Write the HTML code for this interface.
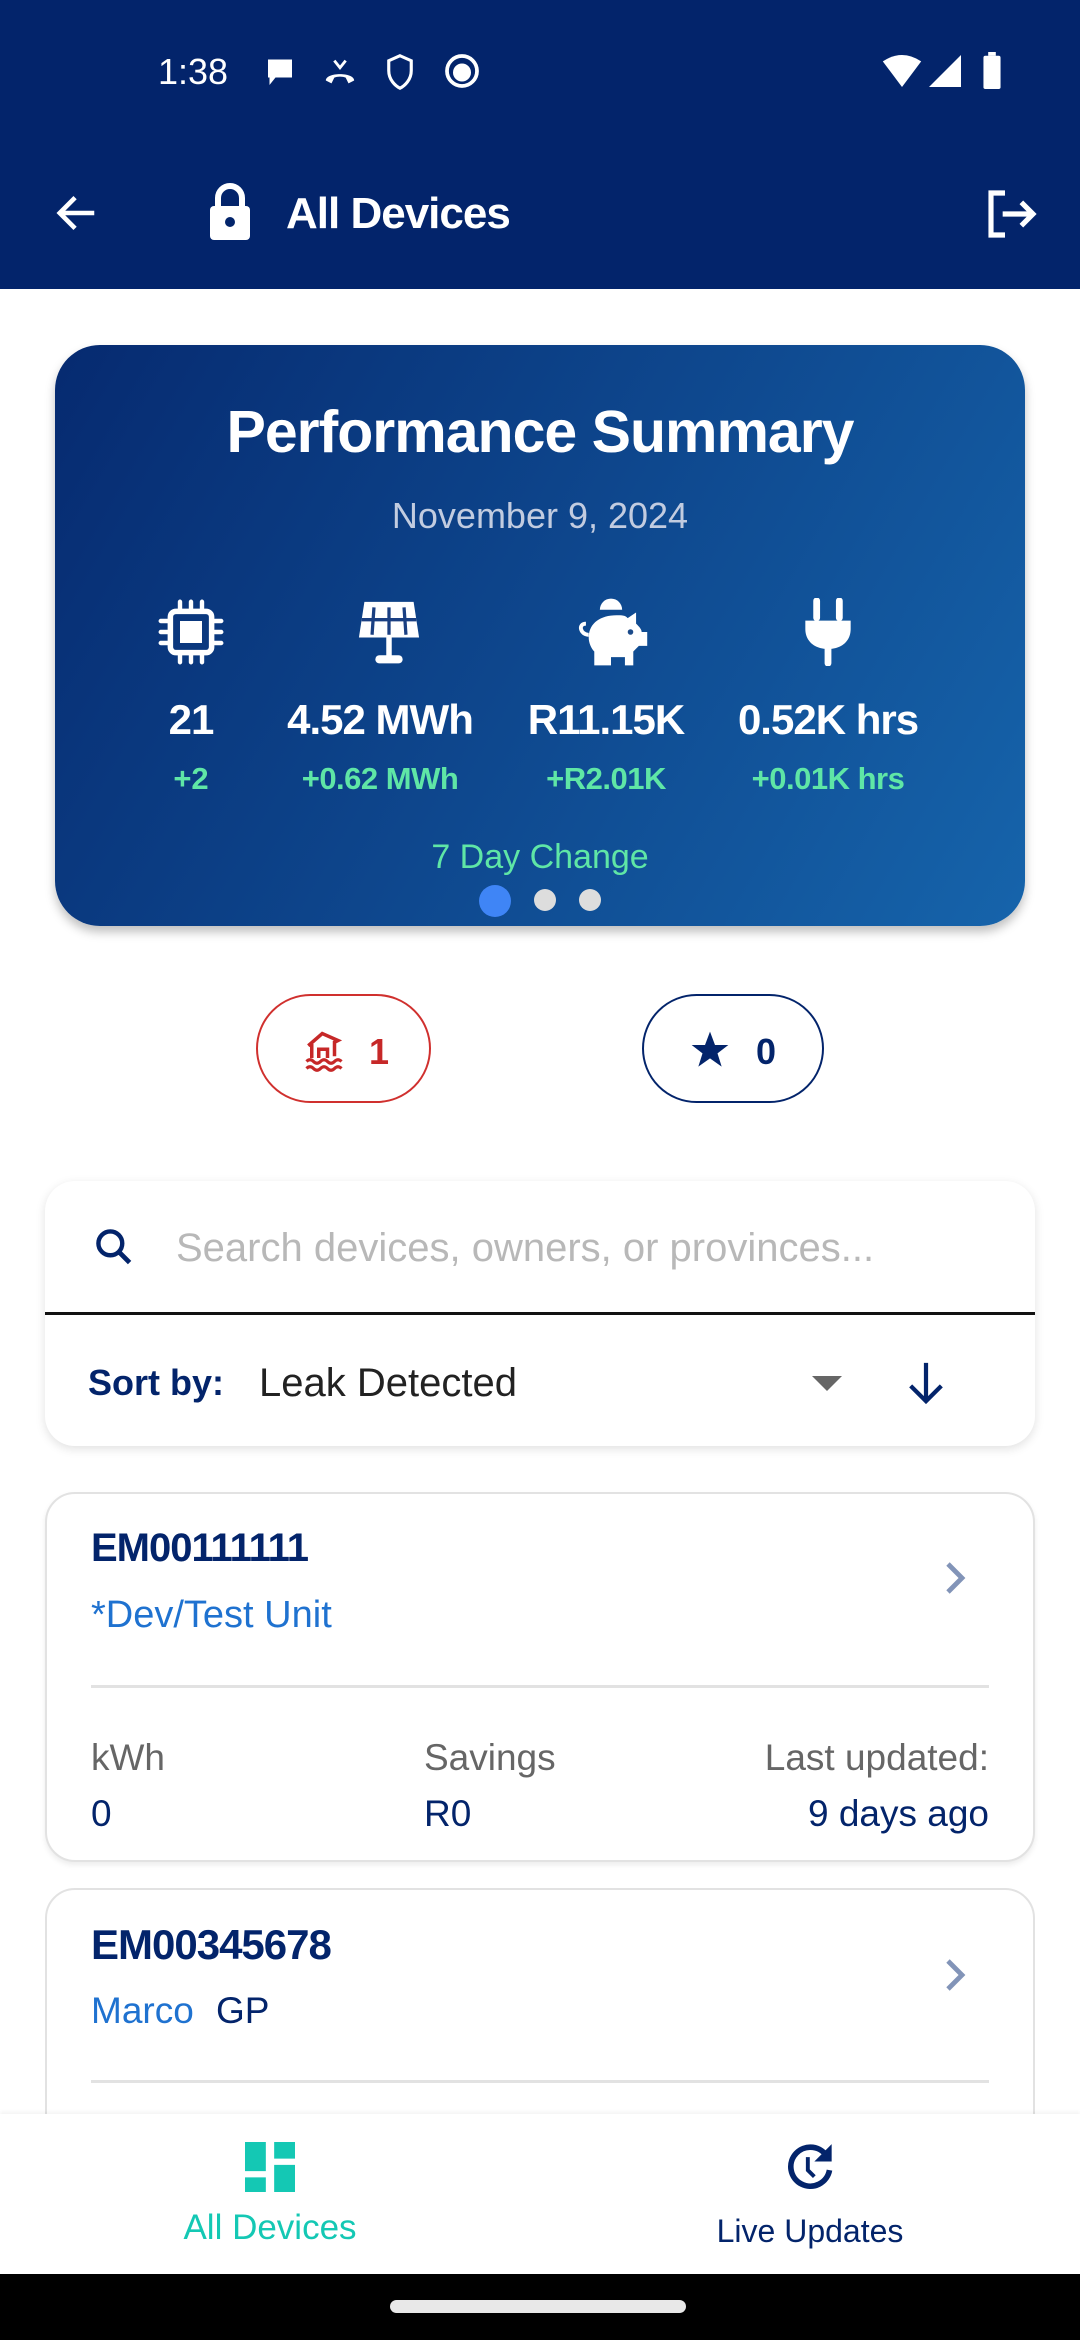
<!DOCTYPE html>
<html><head><meta charset="utf-8"><style>
*{margin:0;padding:0;box-sizing:border-box}
body{width:1080px;height:2340px;position:relative;overflow:hidden;background:#fff;font-family:"Liberation Sans",sans-serif}
.abs{position:absolute}
.t{position:absolute;white-space:nowrap}
.c{transform:translateX(-50%)}
</style></head><body>
<div class="abs" style="left:0;top:0;width:1080px;height:289px;background:#03246b"></div>
<div class="t" style="left:158px;top:51px;font-size:36px;color:#fff">1:38</div>
<svg class="abs" style="left:262px;top:55px" width="36" height="36" viewBox="0 0 24 24"><path d="M4 3h16v12H9l-4 5V15H4z" fill="#fff"/></svg>
<svg class="abs" style="left:320px;top:55px" width="40" height="34" viewBox="0 0 24 24"><path d="M2 18c0-6 20-6 20 0l-4 2-2-4c-2-1-6-1-8 0l-2 4z" fill="#fff"/><path d="M8 4l4 5 4-5" stroke="#fff" stroke-width="2" fill="none"/></svg>
<svg class="abs" style="left:385px;top:53px" width="30" height="38" viewBox="0 0 24 30"><path d="M12 2l9 4v8c0 7-5 12-9 14-4-2-9-7-9-14V6z" stroke="#fff" stroke-width="2.5" fill="none"/></svg>
<svg class="abs" style="left:444px;top:53px" width="36" height="36" viewBox="0 0 24 24"><circle cx="12" cy="12" r="10" fill="none" stroke="#fff" stroke-width="2.5"/><circle cx="12" cy="13" r="6" fill="#fff"/></svg>
<svg class="abs" style="left:882px;top:55px" width="40" height="32" viewBox="0 0 24 20"><path d="M0 4Q12-4 24 4L12 20z" fill="#fff"/></svg>
<svg class="abs" style="left:928px;top:55px" width="34" height="32" viewBox="0 0 24 24"><path d="M24 0V24H0z" fill="#fff"/></svg>
<svg class="abs" style="left:982px;top:52px" width="20" height="38" viewBox="0 0 10 20"><rect x="3" y="0" width="4" height="2" fill="#fff"/><rect x="0.5" y="2" width="9" height="17.5" rx="1" fill="#fff"/></svg>
<svg class="abs" style="left:52px;top:190px" width="50" height="46" viewBox="0 0 24 24"><path d="M21 12H4M11 4l-8 8 8 8" stroke="#fff" stroke-width="2.4" fill="none"/></svg>
<svg class="abs" style="left:206px;top:182px" width="48" height="60" viewBox="0 0 24 30"><path d="M6 13V8a6 6 0 0112 0v5" stroke="#fff" stroke-width="3" fill="none"/><rect x="2" y="12" width="20" height="17" rx="2" fill="#fff"/><circle cx="12" cy="20" r="2.5" fill="#03246b"/></svg>
<div class="t" style="left:286px;top:189px;font-size:44px;font-weight:bold;color:#fff;letter-spacing:-1px">All Devices</div>
<svg class="abs" style="left:984px;top:186px" width="56" height="56" viewBox="0 0 24 24"><path d="M9 3H3v18h6" stroke="#fff" stroke-width="2.2" fill="none"/><path d="M8 12h13M16 7l5 5-5 5" stroke="#fff" stroke-width="2.2" fill="none"/></svg>

<div class="abs" style="left:55px;top:345px;width:970px;height:581px;border-radius:45px;background:linear-gradient(120deg,#062a70,#1664ab);box-shadow:0 6px 10px rgba(0,0,0,0.25)"></div>
<div class="t c" style="left:540px;top:398px;font-size:59px;font-weight:bold;color:#fff;letter-spacing:-1px">Performance Summary</div>
<div class="t c" style="left:540px;top:495px;font-size:36px;color:#c2cce0">November 9, 2024</div>
<svg class="abs" style="left:158px;top:598px" width="66" height="68" viewBox="0 0 24 24"><rect x="4.5" y="4.5" width="15" height="15" rx="2" stroke="#fff" stroke-width="2" fill="none"/><rect x="8" y="8" width="8" height="8" fill="#fff"/><path d="M8 1v3M12 1v3M16 1v3M8 20v3M12 20v3M16 20v3M1 8h3M1 12h3M1 16h3M20 8h3M20 12h3M20 16h3" stroke="#fff" stroke-width="1.6" stroke-linecap="round"/></svg>
<svg class="abs" style="left:348px;top:598px" width="82" height="68" viewBox="0 0 30 24"><path d="M6 1h18l2 13H4z" fill="#fff"/><path d="M9.5 3l-.7 10M15 3v10M20.5 3l.7 10M5 7.5h20" stroke="#1a3f82" stroke-width="1.2"/><rect x="14" y="14" width="2" height="7" fill="#fff"/><rect x="10" y="20.5" width="10" height="3" rx="1.5" fill="#fff"/></svg>
<svg class="abs" style="left:572px;top:598px" width="78" height="68" viewBox="0 0 28 24"><path d="M10 4a4 4 0 018 0z" fill="#fff"/><path d="M6 14c0-5 4-8 10-8 2 0 3 0 4 1l3-2v4c1 1 2 2 2 3h2v5h-3l-2 2v5h-3v-3h-5v3H8v-5c-1-1-2-3-2-5z" fill="#fff"/><path d="M6 13c-3 0-4-4-1-4" stroke="#fff" stroke-width="1.4" fill="none"/><circle cx="21" cy="12" r="1" fill="#1a4a8a"/></svg>
<svg class="abs" style="left:799px;top:598px" width="58" height="68" viewBox="0 0 20 24"><path d="M6 1v6M14 1v6" stroke="#fff" stroke-width="2.4" stroke-linecap="round"/><path d="M2 8h16v3c0 4-3 7-8 7s-8-3-8-7z" fill="#fff"/><path d="M10 17v6" stroke="#fff" stroke-width="2.4" stroke-linecap="round"/></svg>
<div class="t c" style="left:191px;top:696px;font-size:42px;font-weight:bold;color:#fff;letter-spacing:-1px">21</div>
<div class="t c" style="left:380px;top:696px;font-size:42px;font-weight:bold;color:#fff;letter-spacing:-1px">4.52 MWh</div>
<div class="t c" style="left:606px;top:696px;font-size:42px;font-weight:bold;color:#fff;letter-spacing:-1px">R11.15K</div>
<div class="t c" style="left:828px;top:696px;font-size:42px;font-weight:bold;color:#fff;letter-spacing:-1px">0.52K hrs</div>
<div class="t c" style="left:191px;top:761px;font-size:31px;font-weight:bold;color:#5fe6a6">+2</div>
<div class="t c" style="left:380px;top:761px;font-size:31px;font-weight:bold;color:#5fe6a6;letter-spacing:-.5px">+0.62 MWh</div>
<div class="t c" style="left:606px;top:761px;font-size:31px;font-weight:bold;color:#5fe6a6;letter-spacing:-.5px">+R2.01K</div>
<div class="t c" style="left:828px;top:761px;font-size:31px;font-weight:bold;color:#5fe6a6;letter-spacing:-.5px">+0.01K hrs</div>
<div class="t c" style="left:540px;top:838px;font-size:34px;color:#5fe6a6">7 Day Change</div>
<div class="abs" style="left:479px;top:885px;width:32px;height:32px;border-radius:50%;background:#3f85f6"></div>
<div class="abs" style="left:534px;top:889px;width:22px;height:22px;border-radius:50%;background:#ddd"></div>
<div class="abs" style="left:579px;top:889px;width:22px;height:22px;border-radius:50%;background:#ddd"></div>

<div class="abs" style="left:256px;top:994px;width:175px;height:109px;border:2.5px solid #d0302e;border-radius:55px"></div>
<svg class="abs" style="left:302px;top:1030px" width="44" height="42" viewBox="0 0 24 24"><path d="M3 9l8-7 9 4-2 1v8M5 8v8M9 16v-5h5v5" stroke="#c62828" stroke-width="2" fill="none"/><path d="M2 18q2-2 4 0t4 0 4 0 4 0 4 0M2 22q2-2 4 0t4 0 4 0 4 0 4 0" stroke="#c62828" stroke-width="1.8" fill="none"/></svg>
<div class="t" style="left:369px;top:1031px;font-size:36px;font-weight:bold;color:#c62828">1</div>
<div class="abs" style="left:642px;top:994px;width:182px;height:109px;border:2.5px solid #03246b;border-radius:55px"></div>
<svg class="abs" style="left:690px;top:1030px" width="40" height="40" viewBox="0 0 24 24"><path d="M12 1l3 8h8l-6.5 5 2.5 8L12 17l-7 5 2.5-8L1 9h8z" fill="#03246b"/></svg>
<div class="t" style="left:756px;top:1031px;font-size:36px;font-weight:bold;color:#03246b">0</div>

<div class="abs" style="left:45px;top:1181px;width:990px;height:265px;border-radius:30px;background:#fff;box-shadow:0 3px 10px rgba(0,0,0,0.12)"></div>
<svg class="abs" style="left:92px;top:1225px" width="44" height="44" viewBox="0 0 24 24"><circle cx="10" cy="10" r="6.5" stroke="#03246b" stroke-width="2.4" fill="none"/><path d="M14.5 14.5l6 6" stroke="#03246b" stroke-width="2.6"/></svg>
<div class="t" style="left:176px;top:1226px;font-size:40px;color:#b8b8b8">Search devices, owners, or provinces...</div>
<div class="abs" style="left:45px;top:1312px;width:990px;height:3px;background:#111"></div>
<div class="t" style="left:88px;top:1362px;font-size:36px;font-weight:bold;color:#03246b">Sort by:</div>
<div class="t" style="left:259px;top:1361px;font-size:40px;color:#222">Leak Detected</div>
<svg class="abs" style="left:812px;top:1376px" width="30" height="16" viewBox="0 0 30 16"><path d="M0 0h30L15 15z" fill="#666"/></svg>
<svg class="abs" style="left:903px;top:1358px" width="46" height="48" viewBox="0 0 24 24"><path d="M12 2v20M4 14l8 8 8-8" stroke="#03246b" stroke-width="2.2" fill="none"/></svg>

<div class="abs" style="left:45px;top:1492px;width:990px;height:370px;border-radius:30px;border:2px solid #e2e2e2;background:#fff;box-shadow:0 3px 6px rgba(0,0,0,0.08)"></div>
<div class="t" style="left:91px;top:1526px;font-size:40px;font-weight:bold;color:#03246b;letter-spacing:-1px">EM00111111</div>
<div class="t" style="left:91px;top:1594px;font-size:38px;color:#1f72d0">*Dev/Test Unit</div>
<svg class="abs" style="left:944px;top:1560px" width="24" height="36" viewBox="0 0 12 18"><path d="M2 2l7 7-7 7" stroke="#8294b8" stroke-width="2.4" fill="none"/></svg>
<div class="abs" style="left:91px;top:1685px;width:898px;height:3px;background:#e2e2e2"></div>
<div class="t" style="left:91px;top:1737px;font-size:37px;color:#666">kWh</div>
<div class="t" style="left:424px;top:1737px;font-size:37px;color:#666">Savings</div>
<div class="t" style="right:91px;top:1737px;font-size:37px;color:#666">Last updated:</div>
<div class="t" style="left:91px;top:1793px;font-size:37px;color:#03246b">0</div>
<div class="t" style="left:424px;top:1793px;font-size:37px;color:#03246b">R0</div>
<div class="t" style="right:91px;top:1793px;font-size:37px;color:#03246b">9 days ago</div>

<div class="abs" style="left:45px;top:1888px;width:990px;height:400px;border-radius:30px;border:2px solid #e2e2e2;background:#fff"></div>
<div class="t" style="left:91px;top:1921px;font-size:42px;font-weight:bold;color:#03246b;letter-spacing:-1px">EM00345678</div>
<div class="t" style="left:91px;top:1990px;font-size:37px;color:#1f72d0">Marco</div>
<div class="t" style="left:216px;top:1990px;font-size:37px;color:#03246b">GP</div>
<svg class="abs" style="left:944px;top:1957px" width="24" height="36" viewBox="0 0 12 18"><path d="M2 2l7 7-7 7" stroke="#8294b8" stroke-width="2.4" fill="none"/></svg>
<div class="abs" style="left:91px;top:2080px;width:898px;height:3px;background:#e2e2e2"></div>

<div class="abs" style="left:0;top:2114px;width:1080px;height:160px;background:#fff;box-shadow:0 -2px 4px rgba(0,0,0,0.05)"></div>
<svg class="abs" style="left:245px;top:2142px" width="50" height="50" viewBox="0 0 24 24"><path d="M0 0h10v14H0zM14 0h10v8H14zM14 11h10v13H14zM0 17h10v7H0z" fill="#14c8b4"/></svg>
<div class="t c" style="left:270px;top:2208px;font-size:35px;color:#14c8b4">All Devices</div>
<svg class="abs" style="left:784px;top:2142px" width="52" height="52" viewBox="0 0 24 24"><path d="M20 7A9 9 0 1 0 21 13" stroke="#03246b" stroke-width="2.6" fill="none"/><path d="M22 1v8h-8z" fill="#03246b"/><path d="M11 7v6l3 3" stroke="#03246b" stroke-width="1.8" fill="none"/></svg>
<div class="t c" style="left:810px;top:2213px;font-size:32px;color:#03246b">Live Updates</div>
<div class="abs" style="left:0;top:2274px;width:1080px;height:66px;background:#000"></div>
<div class="abs" style="left:390px;top:2300px;width:296px;height:13px;border-radius:7px;background:#e8e8e8"></div>
</body></html>
